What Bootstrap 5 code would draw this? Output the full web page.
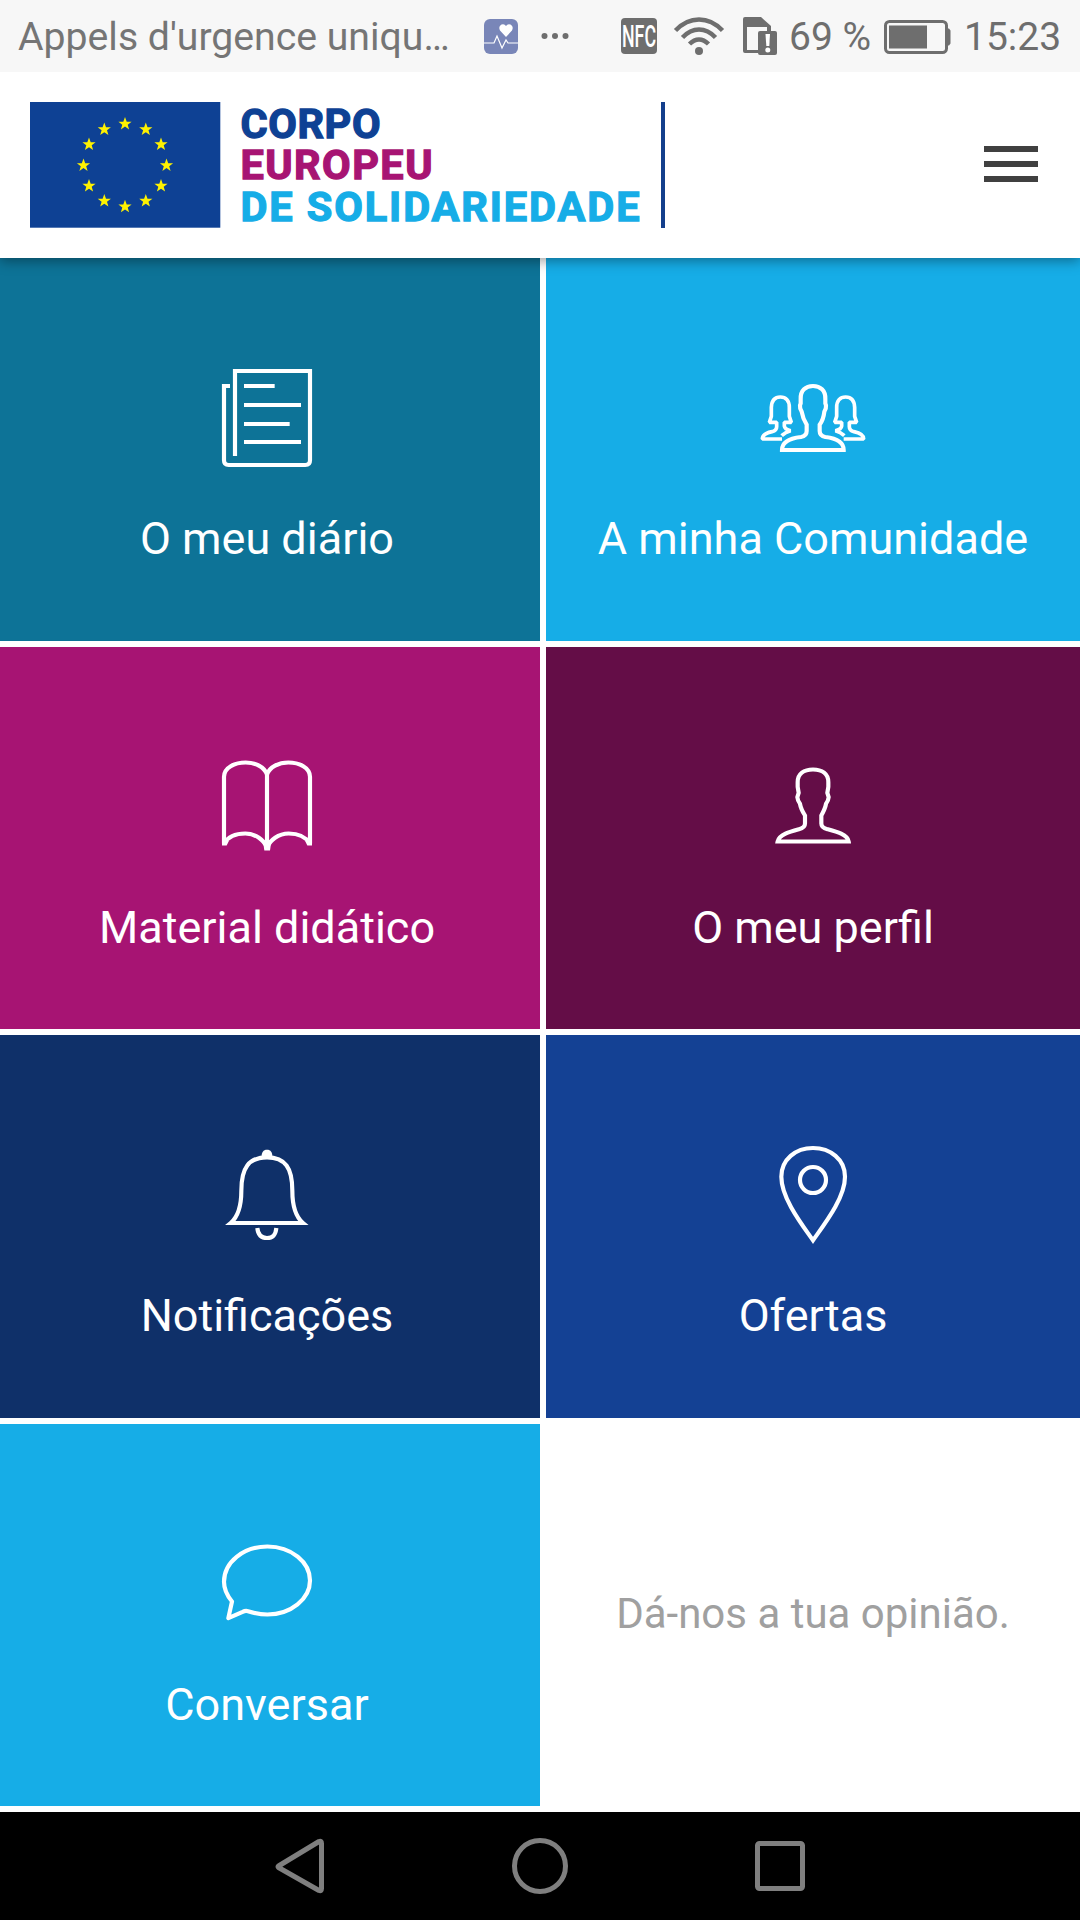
<!DOCTYPE html>
<html lang="pt">
<head>
<meta charset="utf-8">
<meta name="viewport" content="width=device-width, initial-scale=1">
<title>Corpo Europeu de Solidariedade</title>
<link href="https://cdn.jsdelivr.net/npm/bootstrap@5.3.0/dist/css/bootstrap.min.css" rel="stylesheet">
<style>
body{font-family:Roboto,"Noto Sans",sans-serif;background:#fff;width:1080px;height:1920px;overflow:hidden}
svg{display:block;flex:none;overflow:visible}
.statusbar{height:72px;background:#f7f7f7;color:#6e6e6e;font-size:39px;line-height:72px;padding-left:18px;white-space:nowrap;z-index:3}
.statusbar span{padding-top:2px}
.carrier{width:466px;color:#757575;font-size:39.200px}
.gap-nfc{margin-left:51px}.gap-wifi{margin-left:17px}.gap-sim{margin-left:19px}
.charge{margin-left:12px;width:95px}.clock{margin-left:14px}
.appbar{height:186px;box-shadow:0 3px 12px rgba(0,0,0,.38);z-index:2;padding:28px 42px 30px 30px;background:#fff}
.brand-name{font-size:41.500px;font-weight:700;stroke-width:1.300px}
.tiles{display:grid;grid-template-columns:540px 534px;column-gap:6px;grid-auto-rows:382.5px;row-gap:6px;height:1554px}
.tile{color:#fff;text-decoration:none;font-size:45px;line-height:54px;padding-top:91.600px}
.tile:nth-child(odd){padding-right:6px}
.tile svg{fill:none;stroke:#fff;stroke-width:12.500}
.tile span{margin-top:42.800px;white-space:nowrap}
.t-diary{background:#0d7397}.t-sky{background:#16ade7}.t-learn{background:#a71473}
.t-me{background:#640d47}.t-bell{background:#0f3069}.t-offer{background:#144194}
.feedback{color:#a0a0a0;font-size:42px;padding-bottom:3px}
.sysnav{height:108px;background:#000;padding:0 180px}
.sysnav svg{fill:none;stroke:#7f7f7f;stroke-width:5;stroke-linejoin:round}
</style>
<script src="https://cdn.jsdelivr.net/npm/bootstrap@5.3.0/dist/js/bootstrap.bundle.min.js"></script>
</head>
<body>
<div class="statusbar position-relative d-flex align-items-center">
  <span class="carrier">Appels d'urgence uniqu…</span>
  <svg width="34" height="36" viewBox="0 0 34 36"><rect y="1" width="34" height="35" rx="6" fill="#7986b8"/><path d="M22 19l-6-6.500q-2-4 1.500-6 3-1 4.500 1.500 1.500-2.500 4.500-1.500 3.500 2 1.500 6z" fill="#fff"/><path d="M0 25h10l3-7 5 12 4-8 2 3h10" fill="none" stroke="#fff" stroke-width="1.200"/></svg>
  <svg class="ms-4" width="28" height="8" viewBox="0 0 28 8" fill="#6e6e6e"><circle cx="2.500" cy="4" r="3"/><circle cx="13" cy="4" r="3"/><circle cx="23.500" cy="4" r="3"/></svg>
  <svg class="gap-nfc" width="36" height="36" viewBox="0 0 36 36"><rect width="36" height="36" rx="4" fill="#6e6e6e"/><text x="1" y="29" font-family="Roboto, sans-serif" font-size="31" font-weight="500" textLength="34" lengthAdjust="spacingAndGlyphs" fill="#fff">NFC</text></svg>
  <svg class="gap-wifi" width="50" height="38" viewBox="0 0 50 38" fill="none" stroke="#6e6e6e" stroke-width="4.500"><path d="M1.500 13.500Q12 2.500 25 2.500T48.500 13.500M8.500 20.500Q16 12.500 25 12.500T41.500 20.500M15.500 27Q20 22.500 25 22.500T34.500 27"/><circle cx="25" cy="34" r="4" fill="#6e6e6e" stroke="none"/></svg>
  <svg class="gap-sim" width="34" height="38" viewBox="0 0 34 38"><path d="M2 0H18L28 9V16H24V10H4V33H16V36H2Q0 36 0 34V2Q0 0 2 0Z" fill="#6e6e6e"/><rect x="15" y="14" width="19" height="24" rx="2" fill="#6e6e6e"/><path d="M22.500 17h4.500l-.7 12h-3z" fill="#fff"/><circle cx="24.800" cy="33" r="2.500" fill="#fff"/></svg>
  <span class="charge">69 %</span>
  <svg width="66" height="34" viewBox="0 -1 66 34"><rect x="1.500" y="1.500" width="61" height="31" rx="4" fill="none" stroke="#6e6e6e" stroke-width="3"/><path d="M5 5.500H43V28.500H5zM63 8.500h2l1.500 2v13l-1.500 2h-2z" fill="#6e6e6e"/></svg>
  <span class="clock">15:23</span>
</div>
<header class="appbar position-relative d-flex align-items-center justify-content-between">
  <svg width="640" height="128" viewBox="30 100 640 128">
    <defs><path id="eu-star" fill="#fff200" d="M0-6.900 1.700-2.200H6.600L2.700.8 4.100 5.600 0 2.700-4.100 5.600-2.700.8-6.600-2.200H-1.700Z"/></defs>
    <rect x="30" y="102" width="190.300" height="125.700" fill="#0e4194"/>
    <use href="#eu-star" x="125" y="123.900"/><use href="#eu-star" x="145.800" y="129.500"/><use href="#eu-star" x="161" y="144.500"/><use href="#eu-star" x="166.500" y="165.400"/><use href="#eu-star" x="161" y="186"/><use href="#eu-star" x="145.800" y="201"/><use href="#eu-star" x="125" y="206.700"/><use href="#eu-star" x="104.300" y="201"/><use href="#eu-star" x="89" y="186"/><use href="#eu-star" x="83.500" y="165.400"/><use href="#eu-star" x="89" y="144.500"/><use href="#eu-star" x="104.300" y="129.500"/>
    <g class="brand-name">
      <text x="240.500" y="137.500" textLength="140" fill="#0e4194" stroke="#0e4194">CORPO</text>
      <text x="240.500" y="179.300" textLength="192" fill="#a71473" stroke="#a71473">EUROPEU</text>
      <text x="240.500" y="220.800" textLength="399" fill="#16ade7" stroke="#16ade7">DE SOLIDARIEDADE</text>
    </g>
    <rect x="661" y="102" width="4" height="126" fill="#143f8c"/>
  </svg>
  <svg width="54" height="36" viewBox="0 0 54 36" fill="#404040"><path d="M0 0h54v6H0zM0 15h54v6H0zM0 30h54v6H0z"/></svg>
</header>
<main class="tiles">
  <a class="tile t-diary d-flex flex-column align-items-center"><svg width="140" height="120" viewBox="231 30 420 360"><path d="M345 348V93H570V361Q570 375 556 375H326Q312 375 312 361V138H330M372 138H464M372 195H543M372 252H509M372 306H543"/></svg><span>O meu diário</span></a>
  <a class="tile t-sky d-flex flex-column align-items-center"><svg width="140" height="120" viewBox="129 30 420 360"><path d="M246 330H431C431 302 402 294 376 291Q359 288 359 273V254C365 246 371 232 373 215Q379 206 378 196L376 190V177C377 151 361 138 339 138S301 151 302 177V190L300 196Q299 206 305 215C308 232 314 245 320 254V273Q320 288 303 291C276 294 246 302 246 330Z"/><g stroke-width="11" stroke-linejoin="bevel"><path d="M246 297H187C187 284 202 278 216 275Q230 271 230 260V247H208L214 229V202C215 182 224 171 241 171S268 182 268 202V229L274 247H253V258Q254 268 272 272Q256 276 245 287"/><path d="M431 297H491C491 284 476 278 462 275Q448 271 448 260V247H470L464 229V202C463 182 454 171 437 171S410 182 410 202V229L404 247H425V258Q424 268 406 272Q422 276 433 287"/></g></svg><span>A minha Comunidade</span></a>
  <a class="tile t-learn d-flex flex-column align-items-center"><svg width="140" height="120" viewBox="-9 -4.500 420 360"><path stroke-linejoin="bevel" d="M201 324V105C193 82 166 69 137 69C104 69 72 84 72 112V312C84 292 107 282 136 282C167 282 192 302 201 324C210 302 235 282 266 282C295 282 317 292 330 312V112C330 84 298 69 265 69C236 69 209 82 201 105"/><path d="M66 306v12h14l7-14zM336 306v12h-14l-7-14zM190 312l3 21h17l3-21z" fill="#fff" stroke="none"/></svg><span>Material didático</span></a>
  <a class="tile t-me d-flex flex-column align-items-center"><svg width="140" height="120" viewBox="-21 -4.500 420 360"><path d="M83 306H296C293 285 258 276 232 269Q214 265 214 252V228C220 217 226 205 228 193Q235 184 236 173L232 160L235 142V128C235 103 216 90 189 90S143 103 143 128V142L146 160L142 173Q143 184 150 193C152 205 158 217 165 228V252Q165 265 147 269C121 276 87 285 83 306Z"/></svg><span>O meu perfil</span></a>
  <a class="tile t-bell d-flex flex-column align-items-center"><svg width="140" height="120" viewBox="-9 -9 420 360"><path d="M92 279H309C287 260 277 227 277 182C277 114 256 82 201 82S124 114 124 182C124 227 114 260 92 279Z"/><path d="M172 294C174 315 183 324 201 324S227 315 229 294"/><path d="M185 81C184 67 190 59 201 59S218 67 217 81Z" fill="#fff" stroke="none"/></svg><span>Notificações</span></a>
  <a class="tile t-offer d-flex flex-column align-items-center"><svg width="140" height="120" viewBox="-21 -9 420 360"><path d="M189 331C153 280 94 203 94 140C94 88 137 54 189 54S285 88 285 140C285 203 225 280 189 331Z"/><circle cx="189" cy="150" r="39"/></svg><span>Ofertas</span></a>
  <a class="tile t-sky d-flex flex-column align-items-center"><svg width="140" height="120" viewBox="-9 -13.500 420 360"><path stroke-linejoin="round" d="M85 296L96 246C80 227 72 211 72 187C72 128 130 81 202 81S330 128 330 183S273 285 202 285C179 285 160 280 144 275Q136 273 128 277Z"/></svg><span>Conversar</span></a>
  <div class="feedback d-flex align-items-center justify-content-center">Dá-nos a tua opinião.</div>
</main>
<nav class="sysnav d-flex align-items-center justify-content-around">
  <svg width="60" height="60" viewBox="0 0 60 60"><path d="M8.500 30 49 5.500Q51.500 4.500 51.500 7.500V52.500Q51.500 55.500 49 54.500L8.500 31.500Q7.500 30.500 8.500 30Z"/></svg>
  <svg width="60" height="60" viewBox="0 0 60 60"><circle cx="30" cy="30" r="25.500"/></svg>
  <svg width="60" height="60" viewBox="0 0 60 60"><rect x="7.500" y="7.500" width="45" height="45" rx="2"/></svg>
</nav>
</body>
</html>
